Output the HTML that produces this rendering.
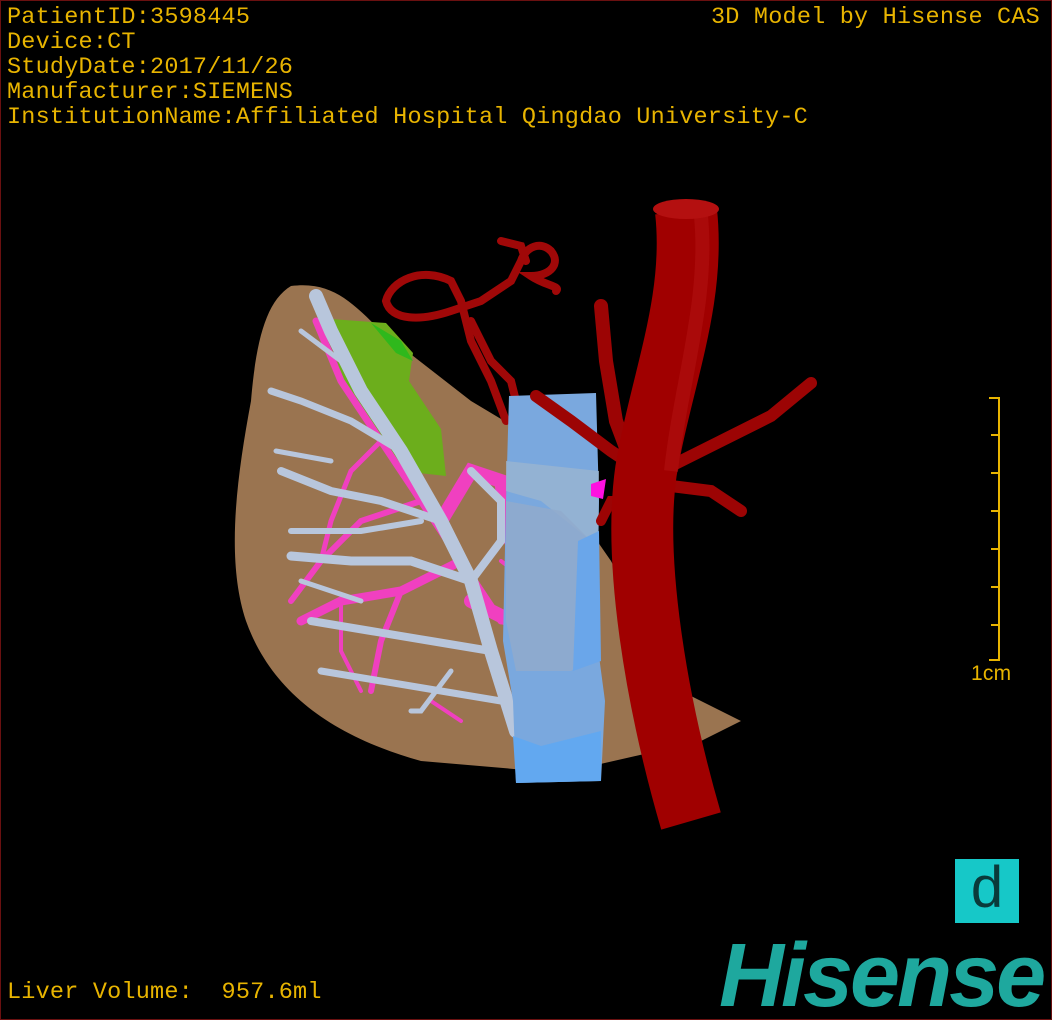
<!DOCTYPE html>
<html><head><meta charset="utf-8"><style>
html,body{margin:0;padding:0;background:#000;}
#w{position:relative;width:1052px;height:1020px;background:#000;overflow:hidden;box-sizing:border-box;border:1px solid #6a1010;}
.t{position:absolute;left:6px;color:#e8b400;font-family:"Liberation Mono",monospace;font-size:23.5px;line-height:25px;white-space:pre;letter-spacing:0.2px;}
svg{position:absolute;left:0;top:0;}
</style></head><body><div id="w">
<svg width="1052" height="1020" viewBox="0 0 1052 1020">
<!-- liver -->
<path d="M290,285 C330,280 350,300 380,330 L470,400 L520,430 L610,560 L680,690 L740,720 L700,740 L560,772 L420,760 C330,735 270,690 245,620 C225,560 235,480 250,400 C255,340 265,300 290,285 Z" fill="#9a7450"/>
<path d="M330,318 L385,322 L412,352 L408,380 L440,428 L445,475 L400,470 L340,380 Z" fill="#6cae1c"/>
<path d="M370,322 L400,340 L412,360 L395,352 Z" fill="#2fb81c"/>
<!-- pink -->
<g stroke="#f040c0" fill="none" stroke-linecap="round">
<path d="M500,620 L460,560 L420,500 L380,440 L340,380 L315,320" stroke-width="7"/>
<path d="M460,560 L400,590 L340,600 L300,620" stroke-width="9"/>
<path d="M420,500 L360,520 L320,560 L290,600" stroke-width="6"/>
<path d="M400,590 L380,640 L370,690" stroke-width="6"/>
<path d="M440,520 L470,470 L500,480 L510,540" stroke-width="14"/>
<path d="M380,440 L350,470 L330,520 L320,560" stroke-width="5"/>
<path d="M470,600 L510,620 L530,640" stroke-width="14"/>
<path d="M340,600 L340,650 L360,690" stroke-width="4"/>
<path d="M500,560 L540,590 L545,600" stroke-width="4"/>
<path d="M430,700 L460,720" stroke-width="4"/>
</g>
<!-- white veins -->
<g stroke="#b8c6dc" fill="none" stroke-linecap="round">
<path d="M515,730 L490,650 L470,580 L440,520 L400,450 L360,390 L330,330 L315,295" stroke-width="14"/>
<path d="M470,580 L410,560 L350,560 L290,555" stroke-width="9"/>
<path d="M440,520 L380,500 L330,490 L280,470" stroke-width="8"/>
<path d="M400,450 L350,420 L300,400 L270,390" stroke-width="7"/>
<path d="M490,650 L430,640 L370,630 L310,620" stroke-width="8"/>
<path d="M500,700 L440,690 L380,680 L320,670" stroke-width="7"/>
<path d="M360,390 L340,360 L300,330" stroke-width="5"/>
<path d="M470,580 L500,540 L500,500 L470,470" stroke-width="8"/>
<path d="M450,670 L420,710 L410,710" stroke-width="5"/>
<path d="M290,530 L360,530 L420,520" stroke-width="6"/>
<path d="M275,450 L330,460" stroke-width="5"/>
<path d="M300,580 L360,600" stroke-width="5"/>
</g>
<!-- red tortuous artery -->
<g stroke="#a00808" fill="none" stroke-width="8" stroke-linecap="round">
<path d="M505,420 L490,380 L470,340 L460,300 L450,280 C420,265 390,280 385,300 C390,320 420,320 450,310 L480,300 L510,280 L520,260 C525,245 540,240 550,250 C560,262 550,275 530,275 C545,285 560,285 555,290"/>
<path d="M470,320 L490,360 L510,380 L520,420"/>
<path d="M500,240 L520,245 L525,260"/>
</g>
<!-- IVC -->
<path d="M508,395 L595,392 L598,500 L596,640 L604,700 L600,780 L515,782 L512,700 L502,640 L505,500 Z" fill="#7aa8de"/>
<path d="M505,460 L598,470 L597,560 L590,540 L540,500 L505,490 Z" fill="#9ab4d0" opacity="0.8"/>
<path d="M505,500 L560,510 L595,545 L596,650 L570,670 L515,670 L505,620 Z" fill="#90aacc" opacity="0.85"/>
<path d="M512,735 L540,745 L600,730 L600,780 L515,782 Z" fill="#62a8f0"/>
<path d="M577,540 L598,530 L600,660 L572,670 Z" fill="#6aa6ea"/>
<!-- aorta branches -->
<g stroke="#9c0404" fill="none" stroke-linecap="round">
<path d="M600,305 L605,360 L615,420 L630,460" stroke-width="14"/>
<path d="M535,395 L570,420 L610,450 L640,470" stroke-width="12"/>
<path d="M660,470 L720,440 L770,415 L810,382" stroke-width="12"/>
<path d="M670,485 L710,490 L740,510" stroke-width="12"/>
<path d="M640,500 L610,500 L600,520" stroke-width="10"/>
</g>
<path d="M590,483 L605,478 L602,498 L590,495 Z" fill="#ff10e0"/>
<!-- aorta -->
<path d="M685,210 C695,300 660,380 645,470 C632,560 655,700 690,820" stroke="#a00000" stroke-width="62" fill="none"/>
<path d="M700,215 C708,300 680,380 670,470" stroke="#b01010" stroke-width="14" fill="none" opacity="0.6"/>
<ellipse cx="685" cy="208" rx="33" ry="10" fill="#b41010"/>
<!-- scale -->
<g stroke="#e8b400" stroke-width="2" fill="none">
<path d="M998,396 L998,660"/>
<path d="M988,397 L998,397 M990,434 L998,434 M990,472 L998,472 M990,510 L998,510 M990,548 L998,548 M990,586 L998,586 M990,624 L998,624 M988,659 L998,659"/>
</g>
</svg>
<div class="t" style="top:4px">PatientID:3598445
Device:CT
StudyDate:2017/11/26
Manufacturer:SIEMENS
InstitutionName:Affiliated Hospital Qingdao University-C</div>
<div class="t" style="top:4px;left:710px">3D Model by Hisense CAS</div>
<div class="t" style="top:979px">Liver Volume:  957.6ml</div>
<div class="t" style="top:660px;left:970px;font-family:'Liberation Sans',sans-serif;font-size:21px">1cm</div>
<div style="position:absolute;left:954px;top:858px;width:64px;height:64px;background:#16c8c8;"></div>
<div style="position:absolute;left:954px;top:858px;width:64px;height:64px;color:#0a3a3a;font-family:'Liberation Sans',sans-serif;font-size:58px;line-height:58px;text-align:center;">d</div>
<div style="position:absolute;left:718px;top:930px;color:#1ea89e;font-family:'Liberation Sans',sans-serif;font-weight:bold;font-style:italic;font-size:90px;line-height:90px;letter-spacing:-3px;">Hisense</div>
</div></body></html>
